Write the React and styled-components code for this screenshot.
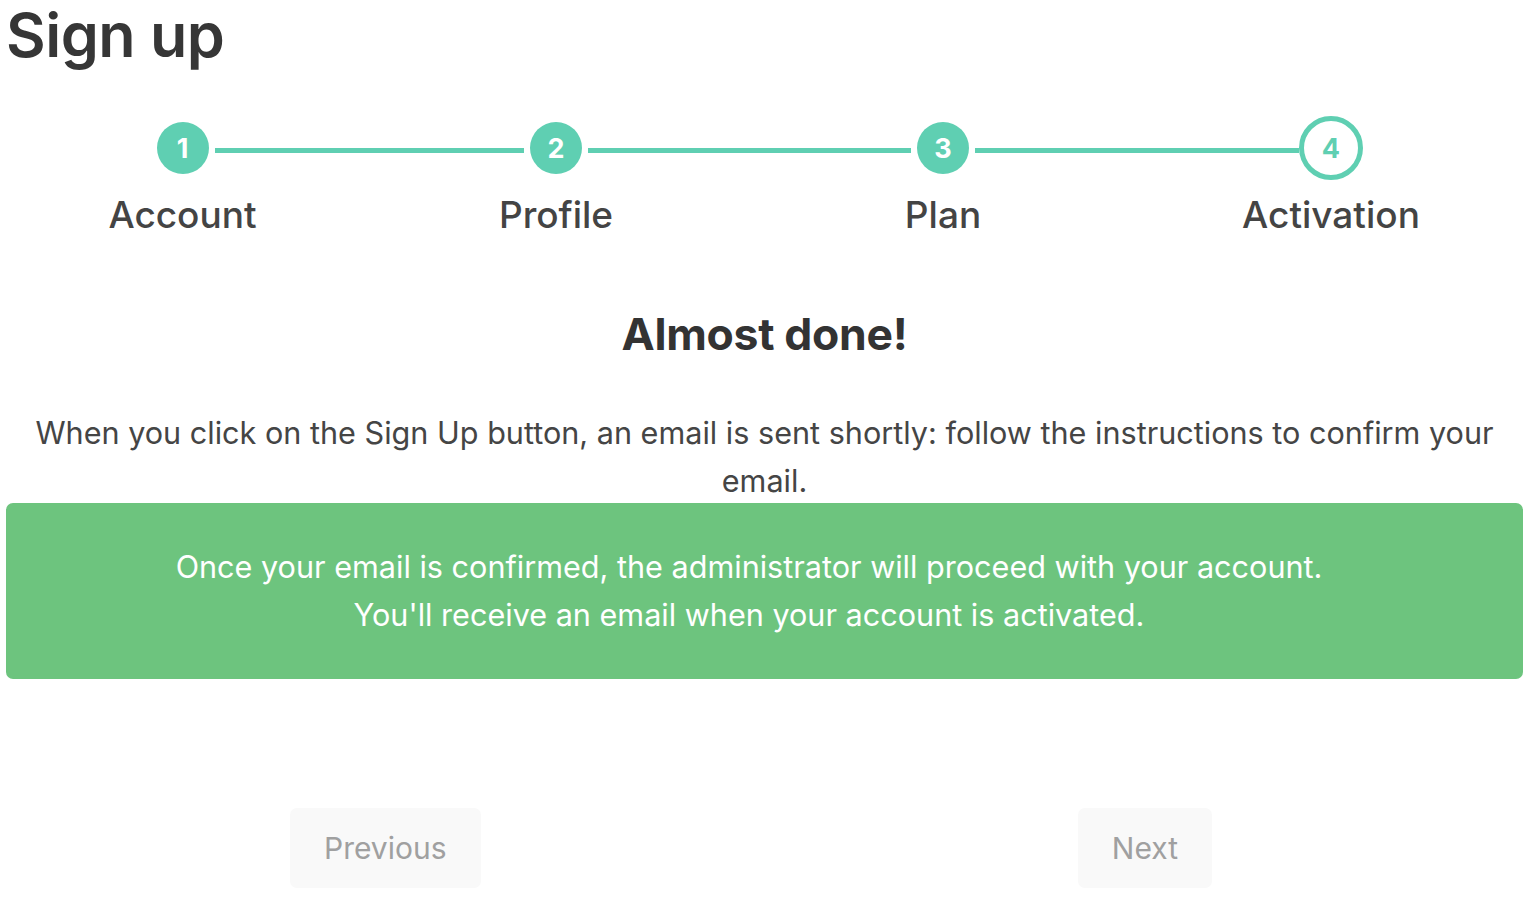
import styled, { createGlobalStyle } from "styled-components";

const GlobalStyle = createGlobalStyle`
  body {
    margin: 0;
    background: #fff;
    font-family: Inter, "Noto Sans", "Liberation Sans", sans-serif;
  }
`

const teal = "#5fcfb2";

const Page = styled.div`
  padding: 0 13px 0 6px;
  color: #444;
`
const Title = styled.h1`
  margin: 0;
  font-size: 61px;
  line-height: 70px;
  font-weight: 600;
  color: #363636;
  letter-spacing: -0.5px;
`
const Stepper = styled.div`
  display: grid;
  grid-template-columns: 353px 394px 380px 396px;
  margin: 46px -5px 0 0;
`
const Step = styled.div`
  display: flex;
  flex-direction: column;
  align-items: center;
`
const Track = styled.div`
  display: flex;
  align-items: center;
  width: 100%;
  height: 64px;
`
const Line = styled.div`
  flex: 1;
  height: 5px;
  margin-top: 4px;
  background: ${p => (p.$hidden ? "transparent" : teal)};
`
const DotSlot = styled.div`
  width: 64px;
  height: 64px;
  display: flex;
  align-items: center;
  justify-content: center;
`
const Dot = styled.div`
  box-sizing: border-box;
  width: ${p => (p.$active ? "64px" : "52px")};
  height: ${p => (p.$active ? "64px" : "52px")};
  border-radius: 50%;
  display: flex;
  align-items: center;
  justify-content: center;
  font-size: 27px;
  font-weight: 700;
  background: ${p => (p.$active ? "#fff" : teal)};
  border: ${p => (p.$active ? `5px solid ${teal}` : "none")};
  color: ${p => (p.$active ? teal : "#fff")};
`
const Label = styled.div`
  margin-top: 13px;
  font-size: 37px;
  line-height: 44px;
  font-weight: 500;
  color: #444;
`
const Heading = styled.h2`
  margin: 71px 0 0;
  text-align: center;
  font-size: 44.5px;
  line-height: 52px;
  font-weight: 700;
  color: #333;
  letter-spacing: -0.3px;
`
const Text = styled.p`
  margin: 49px 0 0;
  text-align: center;
  font-size: 30.6px;
  line-height: 48px;
  color: #454545;
`
const Notice = styled.div`
  margin-top: -2px;
  padding: 40px 51px 40px 20px;
  background: #6dc47e;
  border-radius: 7px;
  color: #fff;
  text-align: center;
  font-size: 30.6px;
  line-height: 48px;
`
const ButtonRow = styled.div`
  display: flex;
  justify-content: space-between;
  margin-top: 129px;
  padding: 0 311px 0 284px;
`
const NavButton = styled.button`
  height: 80px;
  padding: 0 34px;
  border: none;
  border-radius: 7px;
  background: #f9f9f9;
  color: #a0a0a0;
  font-family: inherit;
  font-size: 30px;
  cursor: default;
`

const steps = ["Account", "Profile", "Plan", "Activation"];

export default function App() {
  return (
    <>
      <GlobalStyle />
      <Page>
        <Title>Sign up</Title>
        <Stepper>
          {steps.map((name, i) => (
            <Step key={name}>
              <Track>
                <Line $hidden={i === 0} />
                <DotSlot>
                  <Dot $active={i === 3}>{i + 1}</Dot>
                </DotSlot>
                <Line $hidden={i === steps.length - 1} />
              </Track>
              <Label>{name}</Label>
            </Step>
          ))}
        </Stepper>
        <Heading>Almost done!</Heading>
        <Text>
          When you click on the Sign Up button, an email is sent shortly: follow the instructions to confirm your email.
        </Text>
        <Notice>
          Once your email is confirmed, the administrator will proceed with your account.
          <br />
          You'll receive an email when your account is activated.
        </Notice>
        <ButtonRow>
          <NavButton>Previous</NavButton>
          <NavButton>Next</NavButton>
        </ButtonRow>
      </Page>
    </>
  )
}
